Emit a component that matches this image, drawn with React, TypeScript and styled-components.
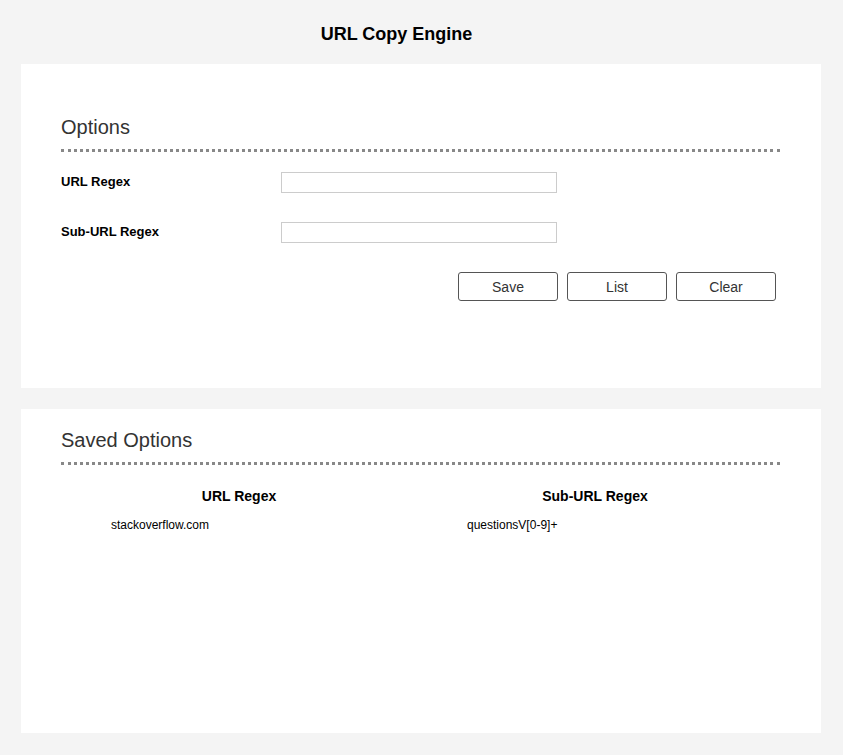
import { PropsWithChildren } from 'react'
import styled, { createGlobalStyle } from 'styled-components';

const GlobalStyle = createGlobalStyle`
  html, body {
    margin: 0;
    padding: 0;
    background: #f4f4f4;
    font-family: "Liberation Sans", Arial, sans-serif;
  }
`

const savedOptions = [
  { url: 'stackoverflow.com', subUrl: 'questionsV[0-9]+' },
];

interface CardProps extends PropsWithChildren {
  title: string;
  spacious?: boolean;
}

const Card = (props: CardProps) => {
  return (
    <Panel spacious={props.spacious}>
      <SectionTitle>{props.title}</SectionTitle>
      {props.children}
    </Panel>
  )
}

const App = () => {
  return (
    <Page>
      <GlobalStyle />
      <Header>URL Copy Engine</Header>
      <Card title="Options" spacious>
        <Form>
          <FieldRow>
            <Label>URL Regex</Label>
            <TextInput type="text" />
          </FieldRow>
          <FieldRow>
            <Label>Sub-URL Regex</Label>
            <TextInput type="text" />
          </FieldRow>
          <Actions>
            <Button>Save</Button>
            <Button>List</Button>
            <Button>Clear</Button>
          </Actions>
        </Form>
      </Card>
      <Card title="Saved Options">
        <Table>
          <HeadCell>URL Regex</HeadCell>
          <HeadCell>Sub-URL Regex</HeadCell>
          {savedOptions.map((option) => (
            <Row key={option.url}>
              <Cell>{option.url}</Cell>
              <Cell>{option.subUrl}</Cell>
            </Row>
          ))}
        </Table>
      </Card>
    </Page>
  )
}

export default App;

const Page = styled.div`
  padding: 0 22px 22px 21px;
  display: flex;
  flex-direction: column;
  gap: 21px;
`
const Header = styled.h1`
  margin: 0 0 -21px;
  height: 64px;
  box-sizing: border-box;
  padding: 23px 49px 0 0;
  text-align: center;
  font-size: 18px;
  line-height: 22px;
  font-weight: bold;
  color: #000;
`
const Panel = styled.div<{ spacious?: boolean }>`
  background: white;
  height: 324px;
  box-sizing: border-box;
  padding: ${(props) => (props.spacious ? '52px' : '20px')} 41px 0 40px;
`
const SectionTitle = styled.h2`
  margin: 0;
  padding-bottom: 10px;
  font-size: 20px;
  line-height: 23px;
  font-weight: normal;
  color: #333;
  border-bottom: 3px dotted #888;
`
const Form = styled.div`
  margin-top: 20px;
  display: flex;
  flex-direction: column;
  gap: 29px;
`
const FieldRow = styled.div`
  display: flex;
  align-items: flex-start;
`
const Label = styled.label`
  width: 220px;
  padding-top: 2px;
  font-size: 13px;
  line-height: 15px;
  font-weight: bold;
  color: #000;
`
const TextInput = styled.input`
  width: 276px;
  height: 21px;
  box-sizing: border-box;
  margin: 0;
  border: 1px solid #ccc;
  padding: 0 4px;
  background: white;
  outline: none;
`
const Actions = styled.div`
  display: flex;
  justify-content: flex-end;
  gap: 9px;
  padding-right: 4px;
`
const Button = styled.button`
  width: 100px;
  height: 29px;
  box-sizing: border-box;
  background: white;
  border: 1px solid #555;
  border-radius: 3px;
  font-family: "Liberation Sans", Arial, sans-serif;
  font-size: 14px;
  color: #333;
  cursor: pointer;
`
const Table = styled.div`
  width: 712px;
  margin-top: 23px;
  display: grid;
  grid-template-columns: 1fr 1fr;
  row-gap: 13px;
`
const Row = styled.div`
  display: contents;
`
const HeadCell = styled.div`
  text-align: center;
  font-size: 14px;
  line-height: 17px;
  font-weight: bold;
  color: #000;
`
const Cell = styled.div`
  padding-left: 50px;
  font-size: 12px;
  line-height: 14px;
  color: #000;
`
